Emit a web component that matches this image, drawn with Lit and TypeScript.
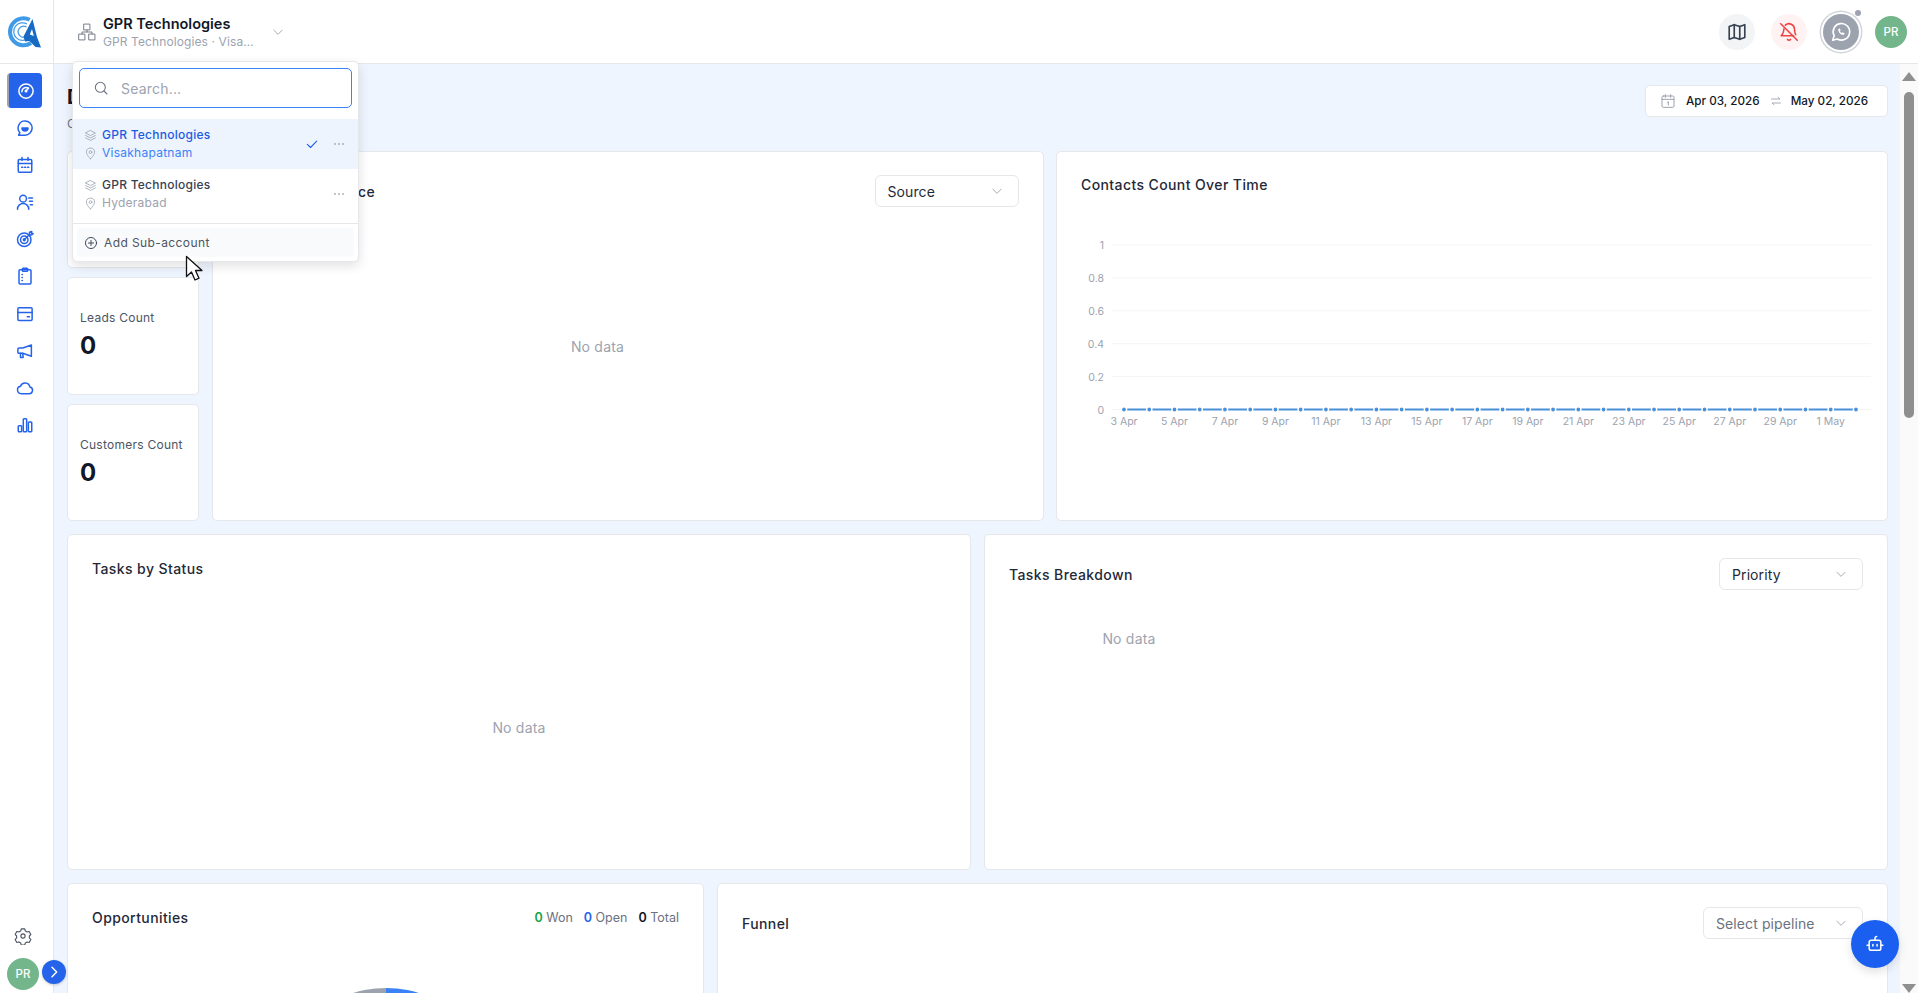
import { LitElement, html, css, svg } from 'lit';
import { customElement } from 'lit/decorators.js';

const ic = (body: unknown, size = 18, sw = 2) => html`<svg
  width=${size} height=${size} viewBox="0 0 24 24" fill="none" stroke="currentColor"
  stroke-width=${sw} stroke-linecap="round" stroke-linejoin="round">${body}</svg>`;

const navIcons = [
  svg`<circle cx="12" cy="12" r="9.5"/><path d="M12 12l3.5-4"/><path d="M6.5 13a5.5 5.5 0 0 1 8-5"/><circle cx="12" cy="12" r="1"/>`,
  svg`<path d="M12 2.5a9.5 9.5 0 0 1 0 19H3.5l1.7-3.2A9.5 9.5 0 0 1 12 2.5z"/><path d="M8 12h8a4 4 0 0 1-8 0z" fill="currentColor"/>`,
  svg`<rect x="3" y="4.5" width="18" height="17" rx="1.5"/><path d="M3 10h18M8 2v4M16 2v4M7.5 15h1.5M11.5 15h1.5M15.5 15h1.5"/>`,
  svg`<circle cx="9.5" cy="7.5" r="4.5"/><path d="M2 21.5a7.5 7.5 0 0 1 15 0"/><path d="M17 6.5h5M18 11h4M19 15.5h3"/>`,
  svg`<circle cx="11" cy="13" r="9"/><circle cx="11" cy="13" r="5"/><circle cx="11" cy="13" r="1.2"/><path d="M11 13l7-7M18 6V3l3-1v3h2l-3 2z"/>`,
  svg`<rect x="4" y="3.5" width="16" height="19" rx="1.5"/><rect x="8.5" y="1.5" width="7" height="4" rx="1"/><path d="M8 10h.5M8 14h.5M8 18h.5"/>`,
  svg`<rect x="2.5" y="3.5" width="19" height="17" rx="1.5"/><path d="M2.5 10h19M15 15.5h3"/>`,
  svg`<path d="M20.5 4L9 8H4a1.5 1.5 0 0 0-1.5 1.5v4A1.5 1.5 0 0 0 4 15h5l11.5 4z"/><path d="M6 15v5.5h3.5L9 15"/>`,
  svg`<path d="M17.5 19.5H7a5 5 0 0 1-1-9.9 6.5 6.5 0 0 1 12.5 1 4.5 4.5 0 0 1-1 8.9z"/>`,
  svg`<rect x="3" y="13" width="4.5" height="8" rx="1"/><rect x="9.7" y="3.5" width="4.5" height="17.5" rx="1"/><rect x="16.5" y="8" width="4.5" height="13" rx="1"/>`,
];

const layers = svg`<path d="M12 3l9 4.5-9 4.5-9-4.5z"/><path d="M3 12l9 4.5 9-4.5"/><path d="M3 16.5L12 21l9-4.5"/>`;
const pin = svg`<path d="M12 22s7.5-7 7.5-12.5a7.5 7.5 0 0 0-15 0C4.500 15 12 22 12 22z"/><circle cx="12" cy="9.500" r="2.500"/>`;
const chevron = svg`<path d="M5 9l7 7 7-7"/>`;
const dots = svg`<circle cx="5" cy="12" r="1.300" fill="currentColor" stroke="none"/><circle cx="12" cy="12" r="1.300" fill="currentColor" stroke="none"/><circle cx="19" cy="12" r="1.300" fill="currentColor" stroke="none"/>`;

@customElement('contacts-chart')
class ContactsChart extends LitElement {
  static styles = css`
    :host { display: block; }
    svg { display: block; }
    text { font-family: 'Inter', sans-serif; font-size: 10.5px; fill: #9ca3af; }
  `;

  render() {
    const yTicks = ['1', '0.8', '0.6', '0.4', '0.2', '0'];
    const days = Array.from({ length: 30 }, (_, i) => 43 + i * 25.24);
    const labels = ['3 Apr', '5 Apr', '7 Apr', '9 Apr', '11 Apr', '13 Apr', '15 Apr', '17 Apr', '19 Apr', '21 Apr',
      '23 Apr', '25 Apr', '27 Apr', '29 Apr', '1 May'];
    return html`<svg width="800" height="210" viewBox="0 0 800 210">
      ${yTicks.map((t, i) => svg`
        <line x1="31" x2="790" y1=${10 + i * 32.9} y2=${10 + i * 32.9} stroke="#f3f4f6"/>
        <text x="23" y=${14 + i * 32.9} text-anchor="end">${t}</text>`)}
      <line x1=${days[0]} x2=${days[29]} y1="174.500" y2="174.500" stroke="#4a90d9" stroke-width="2"/>
      ${days.map((d) => svg`<circle cx=${d} cy="174.500" r="2.600" fill="#4a90d9" stroke="#fff" stroke-width="1.400"/>`)}
      ${labels.map((l, i) => svg`<text x=${days[i * 2]} y="190" text-anchor="middle">${l}</text>`)}
    </svg>`;
  }
}

@customElement('app-root')
class AppRoot extends LitElement {
  static styles = css`
    :host {
      display: block;
      height: 993px;
      overflow: hidden;
      position: relative;
      font-family: 'Inter', 'Open Sans', sans-serif;
      color: #111827;
      background: #fff;
    }
    * { box-sizing: border-box; }
    svg { display: block; flex: none; }

    .shell { display: flex; height: 100%; }

    .side {
      width: 54px;
      flex: none;
      border-right: 1px solid #e5e7eb;
      display: flex;
      flex-direction: column;
      align-items: stretch;
    }
    .logo { height: 64px; border-bottom: 1px solid #e5e7eb; padding: 14px 0 0 6px; }
    .nav { display: flex; flex-direction: column; align-items: center; padding: 9px 4px 0 0; color: #2563eb; }
    .nav-item { width: 35px; height: 37.200px; display: flex; align-items: center; justify-content: center; }
    .nav-item.active {
      height: 35px;
      margin-bottom: 1px;
      background: #2563eb;
      color: #fff;
      border-radius: 4px;
      border-left: 2px solid #9ca3af;
    }
    .side-foot { margin-top: auto; display: flex; flex-direction: column; padding: 0 0 3px 7px; gap: 13px; color: #4b5563; }
    .gear { padding-left: 7px; }
    .avatar {
      width: 32px; height: 32px; border-radius: 50%;
      background: #74b68b; color: #fff;
      font-size: 11.500px; font-weight: 500;
      display: flex; align-items: center; justify-content: center;
    }

    .main { flex: 1; min-width: 0; display: flex; flex-direction: column; }
    .top {
      height: 64px; flex: none;
      border-bottom: 1px solid #e5e7eb;
      display: flex; align-items: center;
      padding: 0 11px 0 23px;
    }
    .org { display: flex; align-items: center; gap: 6px; color: #6b7280; }
    .org-name { font-size: 14.500px; font-weight: 600; color: #111827; line-height: 20px; }
    .org-sub { font-size: 12px; color: #9ca3af; line-height: 16px; letter-spacing: .1px; width: 156px; white-space: nowrap; overflow: hidden; text-overflow: ellipsis; }
    .org-chev { color: #9ca3af; margin-left: 6px; }
    .top-right { margin-left: auto; display: flex; align-items: center; gap: 16px; }
    .round { width: 36px; height: 36px; border-radius: 50%; display: flex; align-items: center; justify-content: center; }
    .map { background: #f3f4f6; color: #374151; }
    .bell { background: #fef2f2; color: #ef4444; }
    .wa {
      background: #9ca3af; color: #fff; position: relative;
      box-shadow: 0 0 0 2px #fff, 0 0 0 3.500px #d1d5db;
    }
    .wa::after {
      content: ''; position: absolute; width: 6px; height: 6px; border-radius: 50%;
      background: #9ca3af; top: -4px; right: -2px;
    }

    .body { flex: 1; min-height: 0; display: flex; }
    .content { flex: 1; min-width: 0; background: #eff5fe; padding: 21px 12px 0 13px; overflow: hidden; }
    .head { display: flex; justify-content: space-between; align-items: flex-start; height: 66px; }
    .page-title { font-size: 20px; font-weight: 700; line-height: 24px; }
    .page-sub { font-size: 12px; color: #6b7280; margin-top: 7px; }
    .range {
      height: 32px; width: 243px; background: #fff; border: 1px solid #e5e7eb; border-radius: 5px;
      display: flex; align-items: center; padding-left: 14px; font-size: 11.700px; font-weight: 500; color: #111827;
      white-space: nowrap;
    }
    .range .cal { color: #9ca3af; margin-right: 10px; }
    .range .swap { color: #9ca3af; margin: 0 9px 0 10px; }

    .row { display: grid; gap: 13px; margin-bottom: 13px; }
    .row-a { grid-template-columns: 132px 1fr 1fr; column-gap: 12.500px; height: 370px; }
    .row-b { grid-template-columns: 1fr 1fr; height: 336px; }
    .row-c { grid-template-columns: 637px 1fr; height: 400px; }

    .card { background: #fff; border: 1px solid #e5e7eb; border-radius: 5px; min-width: 0; position: relative; }
    .stack { display: grid; grid-template-rows: repeat(3, 1fr); gap: 9px; }
    .stat { padding: 32px 0 0 12px; }
    .stat-label { font-size: 12px; color: #4b5563; letter-spacing: .25px; line-height: 16px; }
    .stat-num { font-size: 24px; font-weight: 700; line-height: 30px; margin-top: 5px; }

    .card-head { display: flex; justify-content: space-between; align-items: center; padding: 23px 24px 0 24px; height: 55px; }
    .card-title { font-size: 14px; font-weight: 500; color: #1f2937; letter-spacing: .4px; }
    .sel {
      width: 144px; height: 32px; border: 1px solid #e5e7eb; border-radius: 6px;
      display: flex; align-items: center; justify-content: space-between;
      padding: 0 14px 0 12px; font-size: 14px; color: #1f2937; letter-spacing: .1px;
    }
    .sel svg { color: #9ca3af; }
    .sel.muted { color: #6b7280; width: 160px; }

    .nodata { color: #9ca3af; font-size: 14px; letter-spacing: .2px; text-align: center; }
    .source .nodata { padding: 131px 60px 0 0; }
    .status .card-head { height: 44px; padding-top: 22px; }
    .status .nodata { padding-top: 140px; }
    .breakdown .nodata { width: 288px; padding-top: 40px; }

    .contacts .card-head { height: 43px; padding-top: 22px; }
    .chart-wrap { padding: 40px 0 0 24px; }

    .opp-head { display: flex; justify-content: space-between; align-items: center; padding: 20px 24px 0; height: 47px; }
    .opp-stats { display: flex; gap: 11px; font-size: 12.500px; color: #6b7280; }
    .opp-stats b { font-weight: 600; }
    .won { color: #16a34a; }
    .open { color: #2563eb; }
    .total { color: #111827; }
    .pie {
      width: 220px; height: 220px; border-radius: 50%; margin: 57px auto 0;
      background: conic-gradient(#3b82f6 0 50%, #9ca3af 50% 100%);
    }

    .scroll { width: 18px; flex: none; background: #fafafa; display: flex; flex-direction: column; align-items: center; }
    .arrow-up { margin-top: 8px; border: 7px solid transparent; border-top: 0; border-bottom: 9px solid #8f8f8f; }
    .thumb { width: 10px; height: 326px; margin-top: 11px; background: #8f8f8f; border-radius: 5px; }
    .arrow-down { margin-top: auto; border: 7px solid transparent; border-bottom: 0; border-top: 9px solid #8f8f8f; }

    .expand {
      position: absolute; left: 42px; top: 960px; width: 24px; height: 24px; border-radius: 50%;
      background: #2563eb; color: #fff; display: flex; align-items: center; justify-content: center;
      box-shadow: 0 1px 3px rgba(0, 0, 0, .2);
    }
    .fab {
      position: absolute; left: 1851px; top: 920px; width: 48px; height: 48px; border-radius: 50%;
      background: #1a5ff0; color: #fff; display: flex; align-items: center; justify-content: center;
      box-shadow: 0 4px 10px rgba(0, 0, 0, .12);
    }

    .menu {
      position: absolute; left: 72px; top: 61px; width: 287px; height: 201px;
      background: #fff; border: 1px solid #e5e7eb; border-radius: 5px;
      box-shadow: 0 4px 12px rgba(0, 0, 0, .12);
      display: flex; flex-direction: column;
    }
    .search {
      margin: 6px 6px 0; height: 40px; flex: none; border: 1.500px solid #3b82f6; border-radius: 5px;
      display: flex; align-items: center; gap: 12px; padding-left: 13px;
      font-size: 14px; color: #9ca3af; letter-spacing: .2px;
    }
    .search svg { color: #6b7280; }
    .items { margin-top: 11px; }
    .item { height: 50px; display: flex; align-items: center; padding: 0 12px; }
    .item.on { background: #eef4fd; }
    .item-l { flex: 1; display: grid; grid-template-columns: 13px 1fr; column-gap: 5px; align-items: center; font-size: 12px; line-height: 18px; letter-spacing: .25px; margin-left: -1px; }
    .item-l svg { color: #9ca3af; }
    .item-t { font-weight: 450; color: #374151; }
    .item-s { color: #9ca3af; }
    .item.on .item-t { color: #1d5ce0; }
    .item.on .item-s { color: #3b82f6; }
    .check { color: #2563eb; margin-right: 13px; }
    .more { color: #6b7280; }
    .menu-foot { margin-top: auto; border-top: 1px solid #e5e7eb; padding: 4px 4px 4px; }
    .add {
      height: 29px; border-radius: 4px; background: #f9fafb; display: flex; align-items: center; gap: 6px;
      padding-left: 7px; font-size: 12px; font-weight: 400; color: #4b5563; letter-spacing: .4px;
    }
    .add svg { color: #374151; }
    .cursor { position: absolute; left: 185px; top: 255px; }
  `;

  render() {
    return html`
      <div class="shell">
        <aside class="side">
          <div class="logo">
            <svg width="36" height="36" viewBox="0 0 36 36" fill="none">
              <path d="M23.700 5.800A13.500 13.500 0 1 0 25 29" stroke="#3f9be8" stroke-width="4"/>
              <path d="M21 10A8.800 8.800 0 1 0 22 24.500" stroke="#3f9be8" stroke-width="1.200"/>
              <path d="M20.500 13A5.500 5.500 0 1 0 20.500 22.500" stroke="#3f9be8" stroke-width="1.200"/>
              <path d="M26.500 5l4.500 18 4 10.500-5.500-.5-6-6-4.500.5-1.500-5z" fill="#1769c4"/>
              <path d="M26 15l1.800 7-4-1.500z" fill="#fff"/>
            </svg>
          </div>
          <nav class="nav">
            ${navIcons.map((n, i) => html`<div class="nav-item ${i === 0 ? 'active' : ''}">${ic(n, 18, 2)}</div>`)}
          </nav>
          <div class="side-foot">
            <div class="gear">${ic(svg`<path d="M9.700 2.500h4.600l.8 2.800 2.300 1.300 2.800-.7 2.300 4-2 2.100v2.600l2 2.100-2.300 4-2.800-.7-2.300 1.300-.8 2.800H9.700l-.8-2.800-2.300-1.300-2.800.7-2.300-4 2-2.100v-2.600l-2-2.100 2.300-4 2.800.7 2.300-1.300z"/><circle cx="12" cy="12" r="2.800"/>`, 18, 1.500)}</div>
            <div class="avatar">PR</div>
          </div>
        </aside>

        <div class="main">
          <header class="top">
            <div class="org">
              ${ic(svg`<rect x="8.500" y="2.500" width="7" height="7"/><rect x="2.500" y="14.500" width="7" height="7"/><rect x="14.500" y="14.500" width="7" height="7"/><path d="M12 9.500v2.500H6v2.500M12 12h6v2.500"/>`, 20, 1.100)}
              <div>
                <div class="org-name">GPR Technologies</div>
                <div class="org-sub">GPR Technologies · Visakhapatnam</div>
              </div>
              <div class="org-chev">${ic(chevron, 14, 1.600)}</div>
            </div>
            <div class="top-right">
              <div class="round map">${ic(svg`<path d="M9 4L3.500 6v14L9 18l6 2 5.500-2V4L15 6z"/><path d="M9 4v14M15 6v14"/>`, 22, 1.800)}</div>
              <div class="round bell">${ic(svg`<path d="M6.500 8.500C6 14 3.500 16 3.500 16H17"/><path d="M8 4.500A6 6 0 0 1 18 9c0 2.500.5 4.500 1.300 6"/><path d="M10.300 20a2 2 0 0 0 3.400 0"/><path d="M3 3l18 18"/>`, 22, 1.700)}</div>
              <div class="round wa">${ic(svg`<path d="M3 21l1.500-5A9 9 0 1 1 8 19.600z"/><path d="M9 9c0 3.500 2.500 6 6 6.200l1-1.700-2.200-1.200-1 .8c-1-.4-1.700-1.200-2-2l.8-1L10.500 8z" fill="currentColor" stroke="none"/>`, 22, 1.800)}</div>
              <div class="avatar">PR</div>
            </div>
          </header>

          <div class="body">
            <main class="content">
              <div class="head">
                <div>
                  <div class="page-title">Dashboard</div>
                  <div class="page-sub">Overview of your CRM</div>
                </div>
                <div class="range">
                  <span class="cal">${ic(svg`<rect x="3" y="4.500" width="18" height="17" rx="2"/><path d="M3 9.500h18M8 2.500v4M16 2.500v4M11 14l1.500-1v5"/>`, 16, 1.500)}</span>
                  <span>Apr 03, 2026</span>
                  <span class="swap">${ic(svg`<path d="M3 8h17l-4-3.500M21 16H4l4 3.500"/>`, 12, 1.800)}</span>
                  <span>May 02, 2026</span>
                </div>
              </div>

              <div class="row row-a">
                <div class="stack">
                  <div class="card stat"><div class="stat-label">Contacts Count</div><div class="stat-num">0</div></div>
                  <div class="card stat"><div class="stat-label">Leads Count</div><div class="stat-num">0</div></div>
                  <div class="card stat"><div class="stat-label">Customers Count</div><div class="stat-num">0</div></div>
                </div>
                <section class="card source">
                  <div class="card-head">
                    <div class="card-title">Contacts by Source</div>
                    <div class="sel">Source ${ic(chevron, 14, 1.600)}</div>
                  </div>
                  <div class="nodata">No data</div>
                </section>
                <section class="card contacts">
                  <div class="card-head"><div class="card-title">Contacts Count Over Time</div></div>
                  <div class="chart-wrap"><contacts-chart></contacts-chart></div>
                </section>
              </div>

              <div class="row row-b">
                <section class="card status">
                  <div class="card-head"><div class="card-title">Tasks by Status</div></div>
                  <div class="nodata">No data</div>
                </section>
                <section class="card breakdown">
                  <div class="card-head">
                    <div class="card-title">Tasks Breakdown</div>
                    <div class="sel">Priority ${ic(chevron, 14, 1.600)}</div>
                  </div>
                  <div class="nodata">No data</div>
                </section>
              </div>

              <div class="row row-c">
                <section class="card">
                  <div class="opp-head">
                    <div class="card-title">Opportunities</div>
                    <div class="opp-stats">
                      <span><b class="won">0</b> Won</span>
                      <span><b class="open">0</b> Open</span>
                      <span><b class="total">0</b> Total</span>
                    </div>
                  </div>
                  <div class="pie"></div>
                </section>
                <section class="card">
                  <div class="card-head">
                    <div class="card-title">Funnel</div>
                    <div class="sel muted">Select pipeline ${ic(chevron, 14, 1.600)}</div>
                  </div>
                </section>
              </div>
            </main>
            <div class="scroll">
              <div class="arrow-up"></div>
              <div class="thumb"></div>
              <div class="arrow-down"></div>
            </div>
          </div>
        </div>
      </div>

      <div class="expand">${ic(svg`<path d="M9 5l7 7-7 7"/>`, 16, 2.200)}</div>
      <div class="fab">${ic(svg`<path d="M12 7.500V5a2 2 0 0 1 2-2"/><rect x="5" y="7.500" width="14" height="12" rx="2.500"/><path d="M2.500 13.500H5M19 13.500h2.500M9.500 12.500v2M14.500 12.500v2"/>`, 20, 1.800)}</div>

      <div class="menu">
        <div class="search">${ic(svg`<circle cx="11" cy="11" r="7.500"/><path d="M21 21l-4.500-4.500"/>`, 16, 1.600)} Search...</div>
        <div class="items">
          <div class="item on">
            <div class="item-l">
              ${ic(layers, 13, 1.500)}<span class="item-t">GPR Technologies</span>
              ${ic(pin, 13, 1.500)}<span class="item-s">Visakhapatnam</span>
            </div>
            <span class="check">${ic(svg`<path d="M4 12.500l5.500 5.500L20 7"/>`, 14, 2)}</span>
            <span class="more">${ic(dots, 14)}</span>
          </div>
          <div class="item">
            <div class="item-l">
              ${ic(layers, 13, 1.500)}<span class="item-t">GPR Technologies</span>
              ${ic(pin, 13, 1.500)}<span class="item-s">Hyderabad</span>
            </div>
            <span class="more">${ic(dots, 14)}</span>
          </div>
        </div>
        <div class="menu-foot">
          <div class="add">${ic(svg`<circle cx="12" cy="12" r="9.500"/><path d="M12 7.500v9M7.500 12h9"/>`, 14, 1.600)} Add Sub-account</div>
        </div>
      </div>

      <svg class="cursor" width="22" height="28" viewBox="0 0 22 28">
        <path d="M1.500 1.500v20l5-4.500 3.500 8 4-1.800-3.500-7.700h6.500z" fill="#fff" stroke="#111" stroke-width="1.300" stroke-linejoin="round"/>
      </svg>
    `;
  }
}
